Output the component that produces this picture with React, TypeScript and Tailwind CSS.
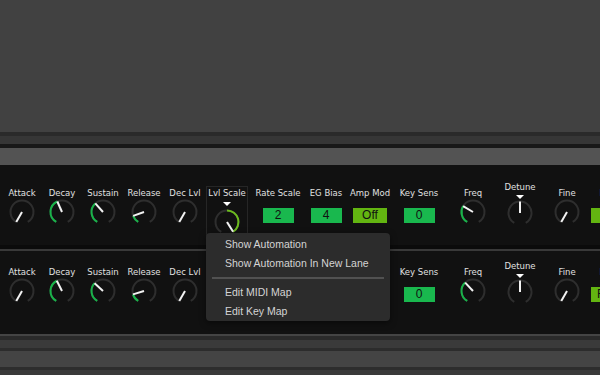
type Ctl = {
  label: string
  cls: string
  kind: "knob" | "box"
  value?: number
  bipolar?: boolean
  selected?: boolean
  lift?: boolean
  hidden?: boolean
  text?: string
  boxCls?: string
}

const GREEN = "#19b34a"
const LIME = "#6cbb1e"

function pt(a: number, r: number) {
  const rad = (a * Math.PI) / 180
  return [14 + r * Math.sin(rad), 14 - r * Math.cos(rad)]
}

function arc(a0: number, a1: number, r: number) {
  const [x0, y0] = pt(a0, r)
  const [x1, y1] = pt(a1, r)
  const large = a1 - a0 > 180 ? 1 : 0
  return `M ${x0} ${y0} A ${r} ${r} 0 ${large} 1 ${x1} ${y1}`
}

function Knob({ value, bipolar, colour }: { value: number; bipolar?: boolean; colour: string }) {
  const from = bipolar ? Math.min(0, value) : -150
  const to = bipolar ? Math.max(0, value) : value
  const [nx, ny] = pt(value, 11.5)
  return (
    <svg width="28" height="28" viewBox="0 0 28 28">
      <path d={arc(-150, 150, 11.5)} fill="none" stroke="#2e2e2e" strokeWidth="2" />
      {to - from > 1 && <path d={arc(from, to, 11.5)} fill="none" stroke={colour} strokeWidth="2" />}
      <line x1="14" y1="14" x2={nx} y2={ny} stroke="#f2f2f2" strokeWidth="2" />
    </svg>
  )
}

function Triangle() {
  return <div className="h-0 w-0 border-x-[4px] border-t-[4px] border-x-transparent border-t-white" />
}

function Control({ c }: { c: Ctl }) {
  return (
    <div
      className={`${c.cls} flex shrink-0 flex-col items-center ${c.lift ? "-mt-[6px]" : ""} ${c.selected ? "outline outline-[#262626]" : ""} ${c.hidden ? "invisible" : ""}`}
    >
      <span
        className="h-[12px] whitespace-nowrap text-[8.5px] leading-[12px] text-[#e0e0e0]"
        style={{ fontFamily: '"DejaVu Sans", sans-serif' }}
      >
        {c.label}
      </span>
      {c.kind === "box" ? (
        <div
          className={`${c.boxCls} mt-[9px] flex h-[15px] items-center text-[12px] leading-[15px] text-[#111]`}
        >
          {c.text}
        </div>
      ) : c.bipolar ? (
        <>
          <div className={c.lift ? "mt-[2px]" : "mt-[3px]"}>
            <Triangle />
          </div>
          <div className={c.lift ? "" : "mt-[2px]"}>
            <Knob value={c.value ?? 0} bipolar colour={c.selected ? LIME : GREEN} />
          </div>
        </>
      ) : (
        <div className="-mt-[1px]">
          <Knob value={c.value ?? -150} colour={GREEN} />
        </div>
      )}
    </div>
  )
}

const greenBox = "justify-center bg-[#19b84e]"
const limeBox = "justify-center bg-[#63b511]"

function row(v: {
  decay: number
  sustain: number
  release: number
  freq: number
  mode: string
  first: boolean
}): Ctl[] {
  const under = !v.first
  return [
    { label: "Attack", cls: "w-[36px]", kind: "knob", value: -150 },
    { label: "Decay", cls: "ml-[4px] w-[36px]", kind: "knob", value: v.decay },
    { label: "Sustain", cls: "ml-[3px] w-[40px]", kind: "knob", value: v.sustain },
    { label: "Release", cls: "ml-[1px] w-[40px]", kind: "knob", value: v.release },
    { label: "Dec Lvl", cls: "ml-[1px] w-[40px]", kind: "knob", value: -150 },
    { label: "Lvl Scale", cls: "ml-[2px] w-[40px]", kind: "knob", value: 148, bipolar: true, selected: v.first, hidden: under },
    { label: "Rate Scale", cls: "ml-[6px] w-[50px]", kind: "box", text: "2", boxCls: `${greenBox} w-[31px]`, hidden: under },
    { label: "EG Bias", cls: "ml-[3px] w-[40px]", kind: "box", text: "4", boxCls: `${greenBox} w-[31px]`, hidden: under },
    { label: "Amp Mod", cls: "ml-[2px] w-[44px]", kind: "box", text: "Off", boxCls: `${limeBox} w-[34px]`, hidden: under },
    { label: "Key Sens", cls: "ml-[5px] w-[44px]", kind: "box", text: "0", boxCls: `${greenBox} w-[31px]` },
    { label: "Freq", cls: "ml-[12px] w-[40px]", kind: "knob", value: v.freq },
    { label: "Detune", cls: "ml-[7px] w-[40px]", kind: "knob", value: 0, bipolar: true, lift: true },
    { label: "Fine", cls: "ml-[7px] w-[40px]", kind: "knob", value: -150 },
    { label: "Mode", cls: "ml-[4px] w-[40px]", kind: "box", text: "Ratio", boxCls: `bg-[#63b511] w-[40px] ${v.mode}` },
  ]
}

const row1 = row({ decay: -24, sustain: -42, release: -110, freq: -59, mode: "pl-[12px]", first: true })
const row2 = row({ decay: -27, sustain: -47, release: -107, freq: -43, mode: "pl-[6px]", first: false })

function MenuItem({ children }: { children: string }) {
  return <div className="h-[19px] pl-[19px] text-[10.5px] leading-[19px] text-[#d4d4d4]">{children}</div>
}

export default function App() {
  return (
    <div
      className="relative h-[375px] w-[600px] overflow-hidden bg-[#414141]"
      style={{ fontFamily: '"Liberation Sans", Arial, sans-serif' }}
    >
      <div className="h-[132px] bg-[#414141]" />
      <div className="h-[4px] bg-[#2a2a2a]" />
      <div className="h-[8px] bg-[#363636]" />
      <div className="h-[4px] bg-[#181818]" />
      <div className="h-[17px] bg-[#535353]" />

      <div className="flex h-[80px] overflow-hidden bg-[#111111] pl-[4px] pt-[22px]">
        {row1.map((c) => (
          <Control key={c.label} c={c} />
        ))}
      </div>
      <div className="h-[4px] bg-[#0b0b0b]" />
      <div className="h-[2px] bg-[#393939]" />

      <div className="flex h-[83px] overflow-hidden bg-[#111111] pl-[4px] pt-[15px]">
        {row2.map((c) => (
          <Control key={c.label} c={c} />
        ))}
      </div>

      <div className="h-[2px] bg-[#444444]" />
      <div className="h-[4px] bg-[#2a2a2a]" />
      <div className="h-[8px] bg-[#3a3a3a]" />
      <div className="h-[3px] bg-[#2c2c2c]" />
      <div className="h-[16px] bg-[#444444]" />
      <div className="h-[3px] bg-[#2d2d2d]" />
      <div className="h-[5px] bg-[#3a3a3a]" />

      <div className="absolute left-[206px] top-[233px] w-[184px] rounded-[4px] bg-[#2c2c2c] pt-[2px] shadow-[0_2px_6px_rgba(0,0,0,0.5)]">
        <MenuItem>Show Automation</MenuItem>
        <MenuItem>Show Automation In New Lane</MenuItem>
        <div className="flex h-[10px] items-center px-[6px]">
          <div className="h-[2px] w-full bg-[#515151]" />
        </div>
        <MenuItem>Edit MIDI Map</MenuItem>
        <MenuItem>Edit Key Map</MenuItem>
      </div>
    </div>
  )
}
